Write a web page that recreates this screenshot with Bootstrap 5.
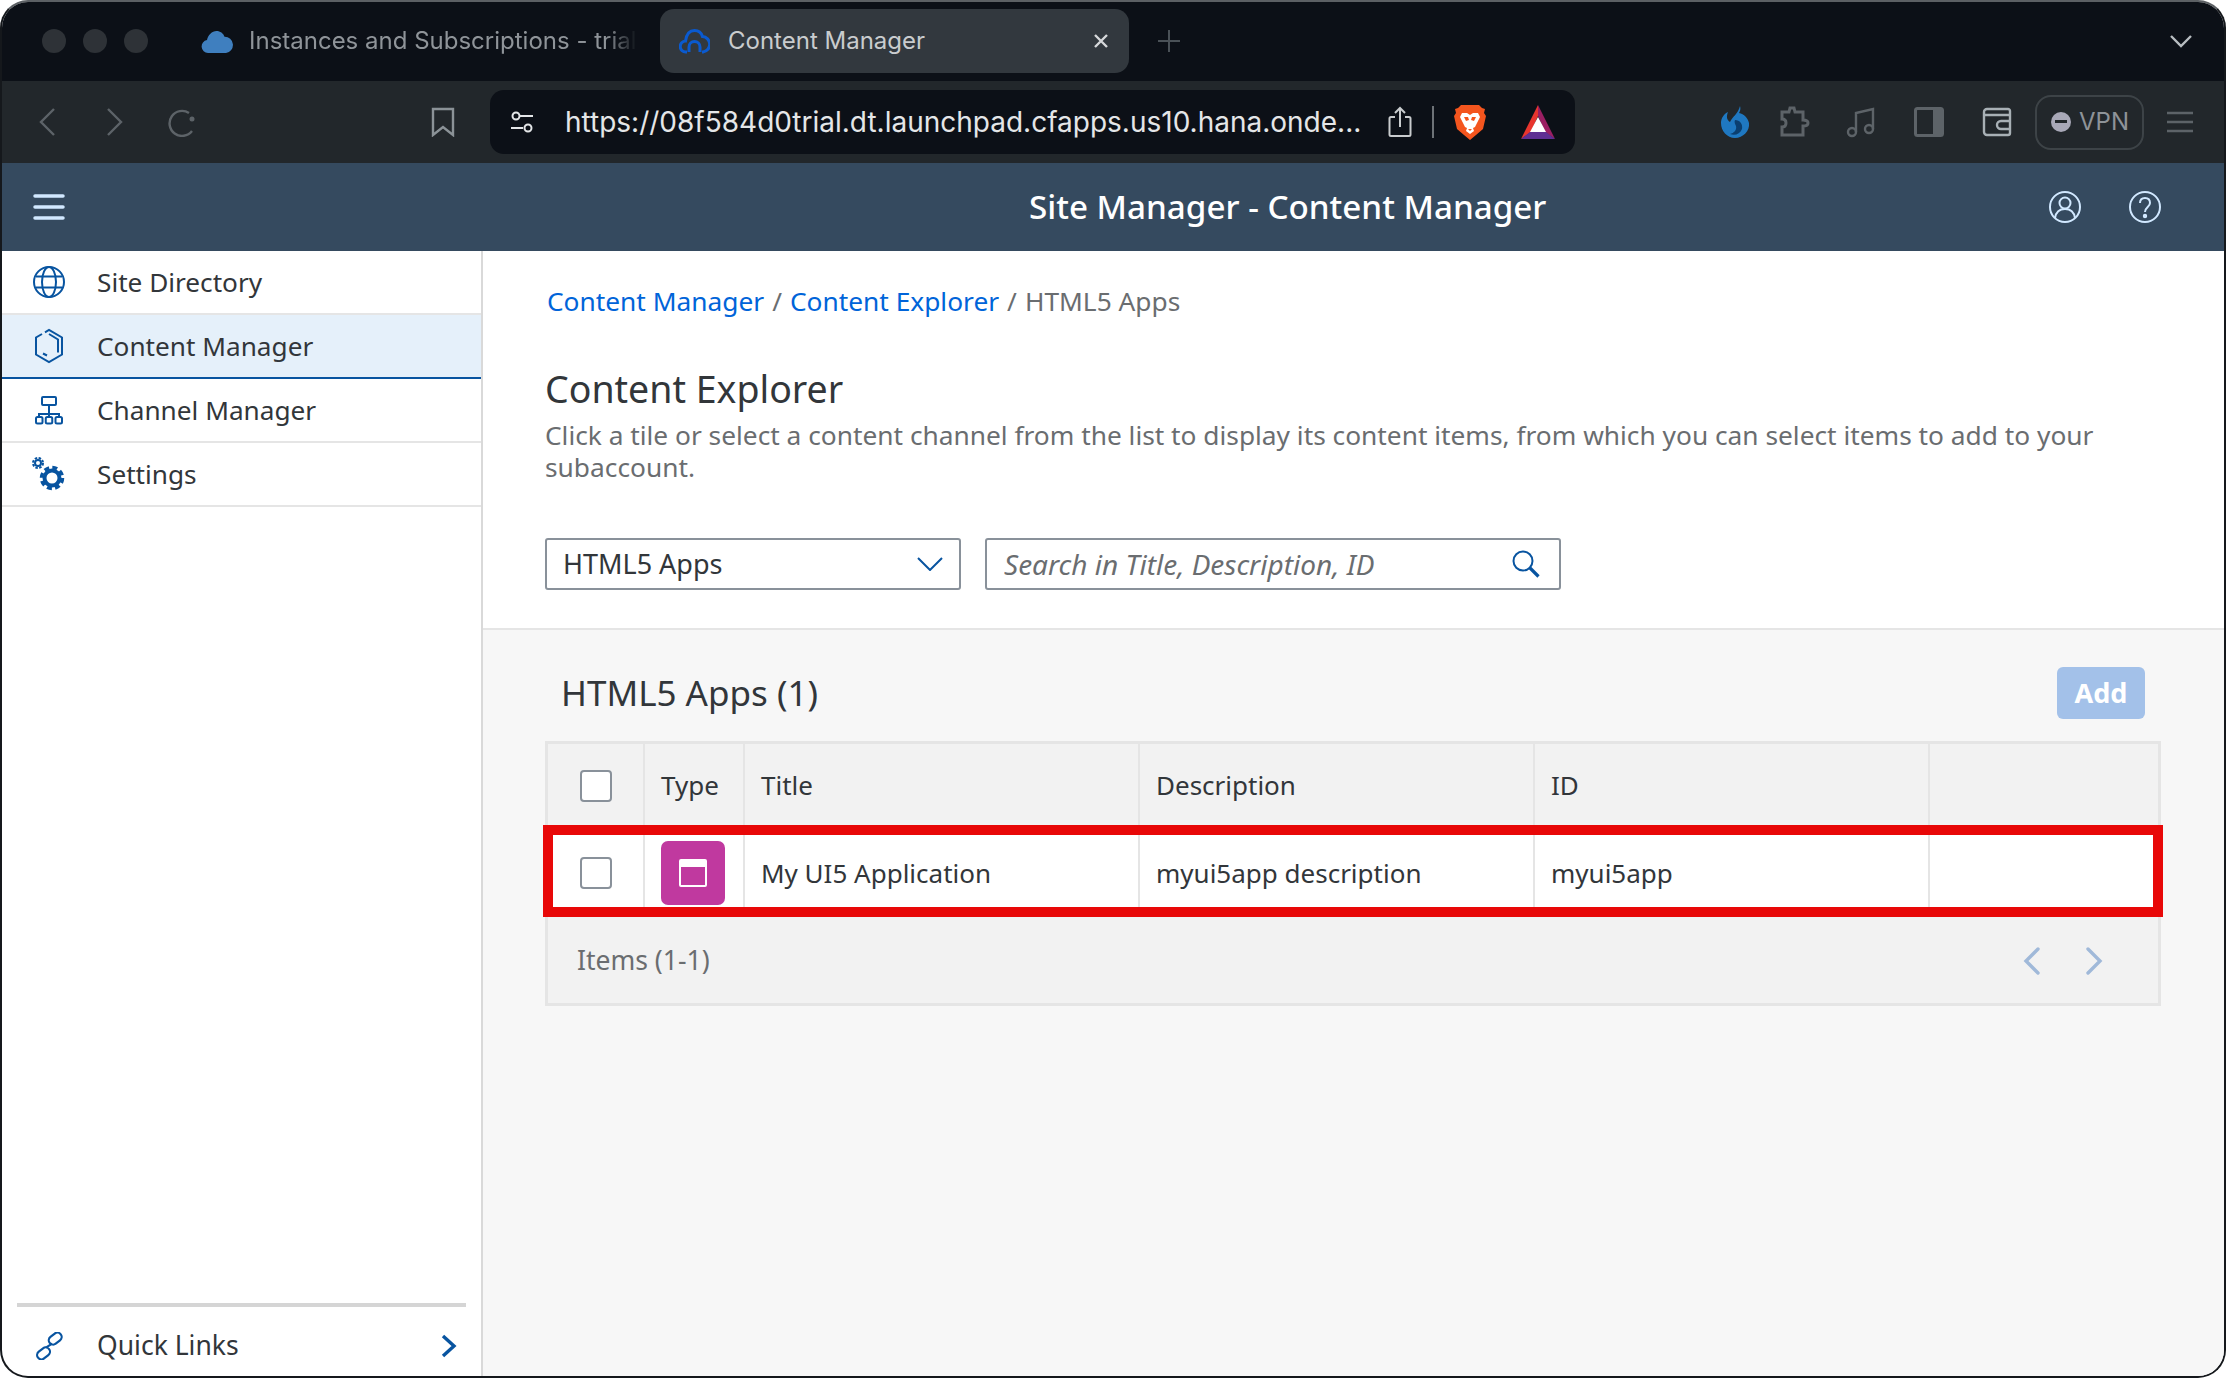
<!DOCTYPE html>
<html lang="en">
<head>
  <meta charset="UTF-8" />
  <meta name="viewport" content="width=device-width, initial-scale=1" />
  <title>Content Manager</title>
  <link href="https://cdn.jsdelivr.net/npm/bootstrap@5.3.3/dist/css/bootstrap.min.css" rel="stylesheet" />
  <style>
    html, body { height: 100%; background: #fff; }
    body { font-family: "Noto Sans", "Liberation Sans", sans-serif; color: #32363a; overflow: hidden; }
    .win { width: 2226px; height: 1378px; border: 2px solid #15181c; border-top-color: #5c6064; border-radius: 28px; overflow: hidden; background: #fff; }

    .tabbar, .toolbar { font-family: Inter, "Liberation Sans", sans-serif; }
    .tabbar { height: 79px; background: #0c1017; padding: 7px 0 0 40px; }
    .tabrow { height: 64px; }
    .lights { gap: 17px; }
    .light { width: 24px; height: 24px; border-radius: 50%; background: #2e3237; }
    .tab-off { width: 512px; padding-left: 53px; color: #8f9499; font-size: 24px; white-space: nowrap; flex: none; }
    .tab-off svg { flex: none; margin-right: 16px; }
    .tab-off span { display: block; -webkit-mask-image: linear-gradient(to right, #000 92%, transparent); mask-image: linear-gradient(to right, #000 92%, transparent); }
    .tab-on { width: 469px; height: 64px; background: #32383e; border-radius: 14px; color: #c9ccce; font-size: 24px; padding: 0 20px 0 19px; flex: none; }
    .tab-on svg:first-child { margin-right: 18px; }
    .tab-plus { margin-left: 29px; }
    .tab-down { margin-left: auto; margin-right: 32px; }

    .toolbar { height: 82px; background: #22272b; padding-left: 31px; }
    .tb-back { margin-right: 40px; }
    .tb-fwd { margin-right: 39px; }
    .tb-mark { margin-left: 235px; margin-right: 35px; }
    .urlbar { width: 1085px; height: 64px; background: #0c1017; border-radius: 14px; color: #e4e6e8; font-size: 28px; padding-left: 20px; white-space: nowrap; flex: none; }
    .url-text { margin-left: 31px; width: 823px; }
    .vsep { width: 2px; height: 32px; background: #6d7277; margin: 0 20px; }
    .tb-lion { margin-right: 34px; }
    .tb-fire { margin-left: 145px; margin-right: 30px; }
    .tb-puzzle { margin-right: 36px; }
    .tb-music { margin-right: 38px; }
    .tb-panel { margin-right: 38px; }
    .vpnbox { width: 109px; height: 55px; border: 2px solid #3d4347; border-radius: 16px; color: #8e9398; font-size: 24px; gap: 8px; padding-left: 14px; margin: 0 21px 0 23px; }
    .vdot { width: 20px; height: 20px; border-radius: 50%; background: #a9a9b8; position: relative; }
    .vdot::after { content: ""; position: absolute; left: 4px; right: 4px; top: 8px; height: 3px; background: #22272b; }

    .shell-head { height: 88px; background: #354a5f; color: #fff; padding-left: 31px; }
    .shell-title { font-size: 33.2px; font-weight: 500; margin-left: 964px; }
    .shell-icons { margin-left: auto; gap: 48px; margin-right: 63px; }

    .side { width: 481px; border-right: 2px solid #d9d9d9; flex: none; }
    .side-item { height: 64px; border-bottom: 2px solid #e5e5e5; padding-left: 29px; font-size: 26.2px; color: #32363a; }
    .side-item span { padding-top: 1px; }
    .side-item svg { width: 36px; height: 36px; margin-right: 30px; flex: none; }
    .side-on { background: #e5f0fa; border-bottom-color: #0854a0; }
    .side-foot { margin-top: auto; }
    .side-rule { height: 4px; margin: 0 15px; background: #d5d5d5; }
    .side-quick { height: 69px; padding: 8px 24px 0 33px; font-size: 26.5px; }
    .side-quick svg:first-child { margin-right: 34px; flex: none; }

    .main { min-width: 0; }
    .top-area { height: 379px; padding: 31px 0 0 62px; border-bottom: 2px solid #e5e5e5; background: #fff; flex: none; }
    .crumbs { font-size: 26.3px; margin: 0 0 0 2px; --bs-breadcrumb-margin-bottom: 0; --bs-breadcrumb-divider-color: #6a6d70; --bs-breadcrumb-item-active-color: #6a6d70; --bs-breadcrumb-item-padding-x: 8px; }
    .crumbs a { color: #0064d9; text-decoration: none; }
    .page-h { font-size: 37.5px; font-weight: 400; margin: 43px 0 0; line-height: 50px; }
    .page-sub { font-size: 26.3px; line-height: 32px; color: #6a6d70; margin: 5px 0 0; width: 1640px; }
    .filters { margin-top: 55px; gap: 24px; }
    .fld { height: 52px; border: 2px solid #89919a; border-radius: 3px; background: #fff; }
    .fld-sel { width: 416px; font-size: 27px; padding: 0 16px; }
    .fld-find { width: 576px; padding-right: 19px; }
    .fld-find input { border: 0; padding: 0 0 0 17px; font-size: 28px; font-style: italic; box-shadow: none; background: transparent; }
    .fld-find input::placeholder { color: #6a6d70; opacity: 1; }

    .lower { background: #f7f7f7; padding: 37px 63px 0 62px; }
    .lower-head { height: 52px; padding: 0 16px; margin-bottom: 22px; }
    .lower-h { font-size: 35px; font-weight: 400; margin: 0; }
    .btn-add { width: 88px; height: 52px; padding: 0; background: #a3c1e9; border: 0; border-radius: 6px; color: #fff; font-size: 27px; font-weight: 700; opacity: 1; }
    .btn-add:disabled { background: #a3c1e9; color: #fff; opacity: 1; }
    .grid-wrap { position: relative; border: 3px solid #e5e5e5; }
    .app-grid { table-layout: fixed; width: 100%; margin: 0; border-collapse: collapse; font-size: 26px; color: #32363a; }
    .app-grid th, .app-grid td { padding: 0 16px; border-right: 2px solid #e5e5e5; font-weight: 400; vertical-align: middle; }
    .app-grid th:last-child, .app-grid td:last-child { border-right: 0; }
    .app-grid th { background: #f2f2f2; height: 81px; padding-top: 2px; }
    .app-grid td { background: #fff; height: 92px; padding-top: 4px; }
    .app-grid .c-chk { width: 96px; padding-left: 0; padding-right: 0; }
    .app-grid .c-type { width: 100px; }
    .app-grid .c-wide { width: 395px; }
    .chk { display: block; width: 32px; height: 32px; border: 2px solid #89919a; border-radius: 4px; background: #fff; margin: 0 auto; }
    .ico-app { width: 64px; height: 64px; border-radius: 7px; background: #c0399f; }
    .ico-app i { display: block; width: 28px; height: 28px; border: 2px solid #fff; border-top-width: 8px; border-radius: 2px; }
    .grid-foot { height: 86px; background: #f2f2f2; padding: 2px 55px 0 29px; color: #6a6d70; font-size: 26.5px; }
    .pager { margin-left: auto; gap: 44px; }
    .red-box { position: absolute; left: -5px; right: -5px; top: 81px; height: 92px; border: 10px solid #e80808; pointer-events: none; }
  </style>
</head>
<body>
<div class="win d-flex flex-column">

  <div class="tabbar flex-shrink-0">
    <div class="tabrow d-flex align-items-center">
      <div class="lights d-flex"><div class="light"></div><div class="light"></div><div class="light"></div></div>
      <div class="tab-off d-flex align-items-center">
        <svg width="32" height="26" viewBox="0 0 32 26"><path fill="#3f7fbf" d="M7 25a6.500 6.500 0 0 1-1-12.900C7 7 11 3 15.500 3c3.800 0 6.800 2.300 8 5.700A8.200 8.200 0 0 1 25 25z"/></svg>
        <span>Instances and Subscriptions - trial</span>
      </div>
      <div class="tab-on d-flex align-items-center">
        <svg width="31" height="26" viewBox="0 0 31 26" fill="none" stroke="#0a5ad0" stroke-width="3"><path d="M8 24H7a5.500 5.500 0 0 1-.5-11C7.500 6 11 2.500 15.500 2.500c4 0 7 2.700 8 6a7.800 7.800 0 0 1 .5 15.500h-1"/><path d="M10 24v-5a5.500 5.500 0 0 1 11 0v5"/></svg>
        <span>Content Manager</span>
        <svg class="ms-auto" width="16" height="16" viewBox="0 0 16 16" stroke="#d6d8da" stroke-width="2.400"><path d="M2 2l12 12M14 2L2 14"/></svg>
      </div>
      <svg class="tab-plus" width="22" height="22" viewBox="0 0 22 22" stroke="#4a5157" stroke-width="2"><path d="M11 0v22M0 11h22"/></svg>
      <svg class="tab-down" width="22" height="14" viewBox="0 0 22 14" fill="none" stroke="#b8bdc1" stroke-width="2.400"><path d="M1 2l10 10L21 2"/></svg>
    </div>
  </div>

  <div class="toolbar d-flex align-items-center flex-shrink-0">
    <svg class="tb-back" width="28" height="30" viewBox="0 0 28 30" fill="none" stroke="#5d6368" stroke-width="2.400"><path d="M21 2L8 15l13 13"/></svg>
    <svg class="tb-fwd" width="28" height="30" viewBox="0 0 28 30" fill="none" stroke="#5d6368" stroke-width="2.400"><path d="M7 2l13 13L7 28"/></svg>
    <svg width="28" height="30" viewBox="0 0 28 30" fill="none" stroke="#5d6368" stroke-width="2.400"><path d="M24 24a12.500 12.500 0 1 1-3-18"/><circle cx="24" cy="12" r="2.500" fill="#5d6368" stroke="none"/></svg>
    <svg class="tb-mark" width="24" height="30" viewBox="0 0 24 30" fill="none" stroke="#8b9297" stroke-width="2.400"><path d="M2 2h20v26l-10-8-10 8z"/></svg>

    <div class="urlbar d-flex align-items-center">
      <svg width="24" height="24" viewBox="0 0 24 24" fill="none" stroke="#e4e6e8" stroke-width="2"><circle cx="6" cy="6" r="3.500"/><path d="M10 6h13M1 18h12"/><circle cx="18" cy="18" r="3.500"/></svg>
      <span class="url-text">https://08f584d0trial.dt.launchpad.cfapps.us10.hana.onde...</span>
      <svg width="24" height="32" viewBox="0 0 24 32" fill="none" stroke="#c9ccce" stroke-width="2"><path d="M7 11H3a1.500 1.500 0 0 0-1.500 1.500v16A1.500 1.500 0 0 0 3 30h18a1.500 1.500 0 0 0 1.500-1.500v-16A1.500 1.500 0 0 0 21 11h-4M12 21V2M7 7l5-5 5 5"/></svg>
      <div class="vsep"></div>
      <svg class="tb-lion" width="32" height="36" viewBox="0 0 32 36"><path fill="#f4551e" d="M7 1h18l3 3 3 1-1 4 2 3-3 13-7 6-6 5-6-5-7-6L0 12l2-3-1-4 3-1z"/><path fill="#fff" d="M8 9h5l3 2 3-2h5l2 4-3 6-2 4-2 1 1 3-4 3-4-3 1-3-2-1-2-4-3-6z"/><path fill="#f4551e" d="M10 13h4l1 3-3 1zM22 13h-4l-1 3 3 1zM14 25h4l-2 2z"/></svg>
      <svg width="36" height="36" viewBox="0 0 36 36"><polygon fill="#e8352e" points="18,1 1,35 11,28 18,12"/><polygon fill="#9a1f63" points="18,1 35,35 25,28 18,12"/><polygon fill="#fff" points="18,13 10,28 26,28"/><polygon fill="#5f2f93" points="10,28 26,28 35,35 1,35"/></svg>
    </div>

    <svg class="tb-fire" width="30" height="32" viewBox="0 0 30 32"><path fill="#1f78c1" d="M20 0c1 3 0 5-1 7 5 1 9 5 10 10 1 8-6 15-14 15S1 25 1 17C1 12 4 8 8 6c-2 5-1 8 2 10 2-5 8-8 10-16z"/><path fill="#0b3f70" d="M15 14c5 0 8 4 7 9-2 5-7 7-12 5 4-1 7-4 6-8-1-2-2-4-1-6z"/></svg>
    <svg class="tb-puzzle" width="30" height="32" viewBox="0 0 30 32" fill="none" stroke="#5d6368" stroke-width="3"><path d="M2 6h7l1-4h4l1 4h8v8c3 0 5 1 5 3s-2 3-5 3v9H2v-8c3 0 4-2 4-4s-1-4-4-4z"/></svg>
    <svg class="tb-music" width="30" height="32" viewBox="0 0 30 32" fill="none" stroke="#5d6368" stroke-width="2.400"><circle cx="6" cy="26" r="4"/><circle cx="23" cy="23" r="4"/><path d="M10 26V7l17-4v20"/></svg>
    <svg class="tb-panel" width="30" height="30" viewBox="0 0 30 30"><rect x="1.500" y="1.500" width="27" height="27" rx="2" fill="none" stroke="#5d6368" stroke-width="3"/><rect x="19" y="2" width="9" height="26" fill="#5d6368"/></svg>
    <svg width="30" height="30" viewBox="0 0 30 30" fill="none" stroke="#a8b0b5" stroke-width="2.400"><path d="M28 8V4a2 2 0 0 0-2-2H5a3 3 0 0 0-3 3v20a3 3 0 0 0 3 3h21a2 2 0 0 0 2-2z"/><path d="M2 8h26M28 14H19a3 3 0 0 0 0 8h9"/></svg>
    <div class="vpnbox d-flex align-items-center"><span class="vdot"></span><span>VPN</span></div>
    <svg width="30" height="24" viewBox="0 0 30 24" stroke="#5d6368" stroke-width="2.400"><path d="M2 3h26M2 12h26M2 21h26"/></svg>
  </div>

  <div class="shell-head d-flex align-items-center flex-shrink-0">
    <svg width="32" height="26" viewBox="0 0 32 26" stroke="#d1e8ff" stroke-width="3.500" stroke-linecap="round"><path d="M2 2h28M2 13h28M2 24h28"/></svg>
    <div class="shell-title">Site Manager - Content Manager</div>
    <div class="shell-icons d-flex">
      <svg width="32" height="32" viewBox="0 0 32 32" fill="none" stroke="#d1e8ff" stroke-width="2"><circle cx="16" cy="16" r="15"/><circle cx="16" cy="12" r="5.500"/><path d="M6 27c1-6 5-9 10-9s9 3 10 9"/></svg>
      <svg width="32" height="32" viewBox="0 0 32 32" fill="none" stroke="#d1e8ff" stroke-width="2"><circle cx="16" cy="16" r="15"/><path d="M11 12c0-3 2-5 5-5s5 2 5 5c0 4-5 4-5 9"/><circle cx="16" cy="25" r="1.200" fill="#d1e8ff"/></svg>
    </div>
  </div>

  <div class="d-flex flex-grow-1">
    <div class="side d-flex flex-column">
      <div class="side-item d-flex align-items-center">
        <svg viewBox="0 0 36 36" fill="none" stroke="#0854a0" stroke-width="2"><circle cx="18" cy="18" r="15"/><ellipse cx="18" cy="18" rx="7" ry="15"/><path d="M5 12.500h26M5 23.500h26"/></svg>
        <span>Site Directory</span>
      </div>
      <div class="side-item side-on d-flex align-items-center">
        <svg viewBox="0 0 36 36" fill="none" stroke="#0854a0" stroke-width="2"><path d="M11 6L5 9.500v17L18 34l13-7.500v-17L18 2l-4 2.300"/><path d="M18 6l9 5.500v13M12 25.500l4 2"/></svg>
        <span>Content Manager</span>
      </div>
      <div class="side-item d-flex align-items-center">
        <svg viewBox="0 0 36 36" fill="none" stroke="#0854a0" stroke-width="2"><rect x="11" y="5" width="14" height="8" rx="1"/><path d="M18 13v12M8 25v-3h20v3"/><rect x="5" y="25" width="6.500" height="6.500" rx="1.500"/><rect x="14.750" y="25" width="6.500" height="6.500" rx="1.500"/><rect x="24.500" y="25" width="6.500" height="6.500" rx="1.500"/></svg>
        <span>Channel Manager</span>
      </div>
      <div class="side-item d-flex align-items-center">
        <svg viewBox="0 0 36 36" fill="none" stroke="#0854a0"><circle cx="21" cy="22" r="7.500" stroke-width="4"/><circle cx="21" cy="22" r="10.500" stroke-width="3.500" stroke-dasharray="5 3.250"/><circle cx="7" cy="7" r="3" stroke-width="2"/><circle cx="7" cy="7" r="5" stroke-width="2" stroke-dasharray="2.500 1.430"/></svg>
        <span>Settings</span>
      </div>
      <div class="side-foot">
        <div class="side-rule"></div>
        <div class="side-quick d-flex align-items-center">
          <svg width="28" height="28" viewBox="0 0 36 36" fill="none" stroke="#0854a0" stroke-width="2.800"><rect x="17" y="3" width="18" height="11" rx="5.500" transform="rotate(-38 26 8.500)"/><rect x="2" y="22" width="18" height="11" rx="5.500" transform="rotate(-38 11 27.500)"/><path d="M14 20l8-5"/></svg>
          <span>Quick Links</span>
          <svg class="ms-auto" width="16" height="24" viewBox="0 0 16 24" fill="none" stroke="#0854a0" stroke-width="3.400"><path d="M2 2l11 10L2 22"/></svg>
        </div>
      </div>
    </div>

    <div class="main flex-grow-1 d-flex flex-column">
      <div class="top-area">
        <nav>
          <ol class="breadcrumb crumbs">
            <li class="breadcrumb-item"><a href="#">Content Manager</a></li>
            <li class="breadcrumb-item"><a href="#">Content Explorer</a></li>
            <li class="breadcrumb-item active">HTML5 Apps</li>
          </ol>
        </nav>
        <h1 class="page-h">Content Explorer</h1>
        <p class="page-sub">Click a tile or select a content channel from the list to display its content items, from which you can select items to add to your subaccount.</p>
        <div class="filters d-flex">
          <div class="fld fld-sel d-flex align-items-center justify-content-between">
            <span>HTML5 Apps</span>
            <svg width="26" height="14" viewBox="0 0 26 14" fill="none" stroke="#0854a0" stroke-width="2"><path d="M1 1l12 12L25 1"/></svg>
          </div>
          <div class="fld fld-find d-flex align-items-center">
            <input class="form-control" placeholder="Search in Title, Description, ID" />
            <svg class="flex-shrink-0" width="28" height="28" viewBox="0 0 28 28" fill="none" stroke="#0854a0" stroke-width="2"><circle cx="11" cy="11" r="9.500"/><path d="M18 18l8.500 8.500" stroke-width="3.200"/></svg>
          </div>
        </div>
      </div>

      <div class="lower flex-grow-1">
        <div class="lower-head d-flex align-items-center justify-content-between">
          <h2 class="lower-h">HTML5 Apps (1)</h2>
          <button class="btn btn-add" disabled>Add</button>
        </div>
        <div class="grid-wrap">
          <table class="app-grid">
            <thead>
              <tr>
                <th class="c-chk"><span class="chk"></span></th>
                <th class="c-type">Type</th>
                <th class="c-wide">Title</th>
                <th class="c-wide">Description</th>
                <th class="c-wide">ID</th>
                <th></th>
              </tr>
            </thead>
            <tbody>
              <tr>
                <td class="c-chk"><span class="chk"></span></td>
                <td class="c-type"><div class="ico-app d-flex align-items-center justify-content-center"><i></i></div></td>
                <td>My UI5 Application</td>
                <td>myui5app description</td>
                <td>myui5app</td>
                <td></td>
              </tr>
            </tbody>
          </table>
          <div class="grid-foot d-flex align-items-center">
            <span>Items (1-1)</span>
            <div class="pager d-flex">
              <svg width="18" height="28" viewBox="0 0 18 28" fill="none" stroke="#a0b9d9" stroke-width="3.400" stroke-linecap="round"><path d="M15 2L3 14l12 12"/></svg>
              <svg width="18" height="28" viewBox="0 0 18 28" fill="none" stroke="#a0b9d9" stroke-width="3.400" stroke-linecap="round"><path d="M3 2l12 12L3 26"/></svg>
            </div>
          </div>
          <div class="red-box"></div>
        </div>
      </div>
    </div>
  </div>
</div>
</body>
</html>
